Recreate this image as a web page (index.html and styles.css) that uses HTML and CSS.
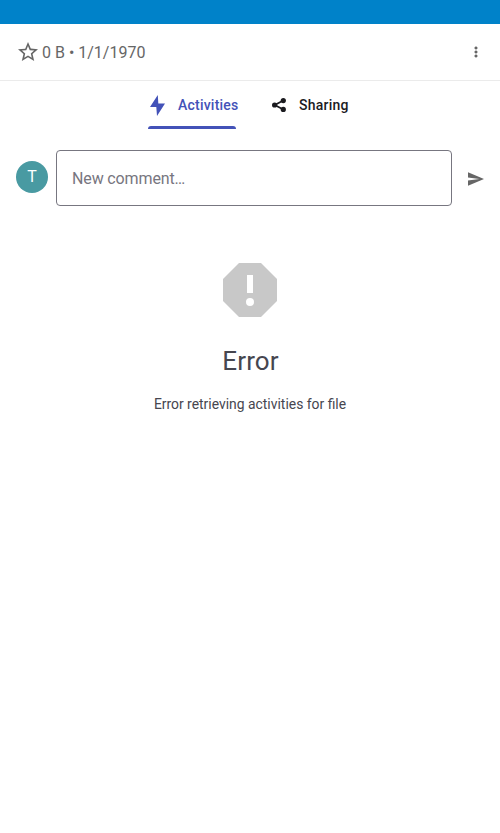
FILE: index.html
```html
<!DOCTYPE html>
<html lang="en">
<head>
<meta charset="utf-8">
<title>File details</title>
<link rel="stylesheet" href="styles.css">
</head>
<body>
<div class="statusbar"></div>
<header class="header">
  <svg class="star" viewBox="2 2 20 19"><path d="M22 9.24l-7.19-.62L12 2 9.19 8.63 2 9.24l5.46 4.73L5.82 21 12 17.27 18.18 21l-1.63-7.03L22 9.24zM12 15.4l-3.76 2.27 1-4.28-3.32-2.88 4.38-.38L12 6.1l1.71 4.04 4.38.38-3.32 2.88 1 4.28L12 15.4z"/></svg>
  <span class="meta">0 B • 1/1/1970</span>
  <svg class="more" viewBox="0 0 24 24"><path d="M12 8a2 2 0 1 0 0-4 2 2 0 0 0 0 4zm0 2a2 2 0 1 0 0 4 2 2 0 0 0 0-4zm0 6a2 2 0 1 0 0 4 2 2 0 0 0 0-4z" stroke="currentColor" stroke-width=".6"/></svg>
</header>
<nav class="tabs">
  <div class="tab active">
    <svg class="bolt" viewBox="0 0 15 21"><path d="M7.8 0L0 12h6.3L7 21l8-12.4H8.3z"/></svg>
    <span>Activities</span>
  </div>
  <div class="tab">
    <svg class="share" viewBox="0 0 14 14"><path d="M11.3 2.5L2.8 7l8.5 4.5" fill="none" stroke="currentColor" stroke-width="1.8"/><circle cx="11.3" cy="2.6" r="2.6"/><circle cx="2.6" cy="7" r="2.6"/><circle cx="11.3" cy="11.4" r="2.6"/></svg>
    <span>Sharing</span>
  </div>
</nav>
<div class="comment">
  <div class="avatar">T</div>
  <div class="field">New comment…</div>
  <svg class="send" viewBox="2 3 21 18"><path d="M2.01 21L23 12 2.01 3 2 10l15 2-15 2z"/></svg>
</div>
<main class="empty">
  <svg class="erricon" viewBox="0 0 54 54"><path fill-rule="evenodd" d="M16 0h22l16 16v22L38 54H16L0 38V16zM24 12v18h6V12zM27 35a4 4 0 1 0 0 8 4 4 0 0 0 0-8z"/></svg>
  <h1>Error</h1>
  <p>Error retrieving activities for file</p>
</main>
</body>
</html>
```
FILE: styles.css
```css
* { box-sizing: border-box; }
body { margin: 0; height: 833px; background: #fff; font-family: Roboto, sans-serif; color: #46464f; }
svg { display: block; fill: currentColor; flex: none; }
.statusbar { height: 24px; background: #0082c9; }
.header { height: 57px; display: flex; align-items: center; padding: 0 16px 0 18px; border-bottom: 1px solid #ebebeb; color: #666; }
.star { width: 20px; height: 19px; margin-top: -1px; }
.meta { margin-left: 4px; font-size: 16px; flex: 1; }
.more { width: 16px; height: 16px; }
.tabs { height: 48px; display: flex; padding-left: 148px; gap: 36px; font-size: 14px; font-weight: 500; letter-spacing: .22px; color: #1b1b1f; }
.tab { display: flex; align-items: center; height: 48px; white-space: nowrap; }
.active { width: 88px; color: #4352b8; padding-left: 2px; position: relative; }
.active::after { content: ""; position: absolute; left: 0; right: 0; bottom: 0; height: 3px; background: #4352b8; border-radius: 3px 3px 0 0; }
.bolt { width: 15px; height: 21px; margin-right: 13px; }
.share { width: 14px; height: 14px; margin-right: 13px; }
.comment { display: flex; align-items: center; padding: 21px 16px 0; }
.avatar { width: 32px; height: 32px; margin-top: -2px; border-radius: 50%; background: #499aa2; color: #fff; font-size: 16px; line-height: 32px; text-align: center; }
.field { flex: 1; height: 56px; margin: 0 16px 0 8px; border: 1px solid #777680; border-radius: 4px; padding-left: 15px; line-height: 56px; font-size: 16px; letter-spacing: -.13px; color: #777680; }
.send { width: 16px; height: 14px; margin-top: 2px; color: #666; }
.empty { display: flex; flex-direction: column; align-items: center; padding-top: 57px; }
.erricon { width: 54px; height: 54px; color: #c8c8c8; }
h1 { margin: 28px 0 0 1px; font-size: 26px; line-height: 32px; font-weight: 400; letter-spacing: .1px; }
p { margin: 17px 0 0; font-size: 13.9px; line-height: 20px; }
```
